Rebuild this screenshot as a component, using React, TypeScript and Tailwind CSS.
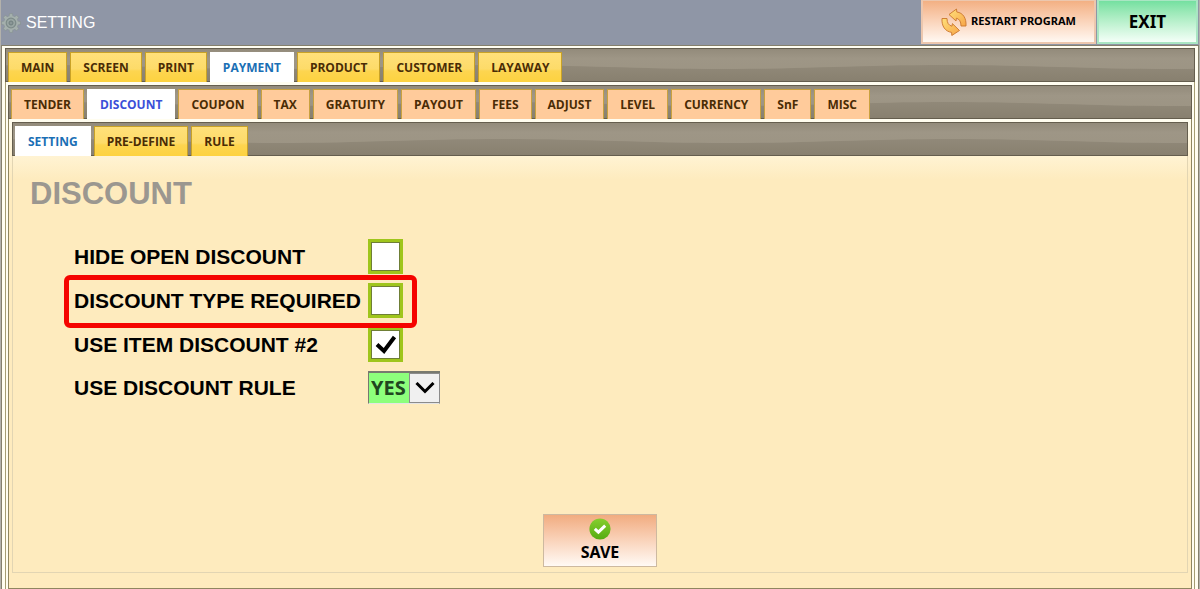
import React, { useId, useState } from 'react';

type Tone = 'yellow' | 'peach';

interface TabFrameProps {
  tabs: string[];
  initial: string;
  tone: Tone;
  children: React.ReactNode;
}

const toneClasses: Record<Tone, string> = {
  yellow:
    'border-[#c9a227] bg-[linear-gradient(#ffe07a_0%,#fddb69_55%,#fdd550_62%,#fdd23f_100%)] text-[#4a2c05]',
  peach: 'border-[#c9a13f] bg-[#ffcb9b] text-[#4a2c05]',
};

const activeText: Record<Tone, string> = {
  yellow: 'text-[#1a6fb5]',
  peach: 'text-[#3c4fd8]',
};

const BarTexture: React.FC = () => {
  const id = useId();
  return (
    <svg className="absolute inset-0 h-full w-full" aria-hidden="true">
      <defs>
        <linearGradient id={`${id}-fill`} x1="0" y1="0" x2="0" y2="1">
          <stop offset="0" stopColor="#918979" />
          <stop offset="1" stopColor="#877f6e" />
        </linearGradient>
        <pattern id={`${id}-wave`} x="40" width="450" height="34" patternUnits="userSpaceOnUse">
          <path
            d="M0 16 C85 16 140 20 225 20 S365 16 450 16 V34 H0 Z"
            fill={`url(#${id}-fill)`}
          />
        </pattern>
      </defs>
      <rect width="100%" height="100%" fill={`url(#${id}-wave)`} />
    </svg>
  );
};

const TabFrame: React.FC<TabFrameProps> = ({ tabs, initial, tone, children }) => {
  const [active, setActive] = useState(initial);

  return (
    <div className="flex flex-1 flex-col">
      <div className="relative h-[34px] border border-[#655e4e] bg-linear-to-b from-[#938b7b] via-[#9e9686] via-30% to-[#9b9382]">
        <BarTexture />
        <div className="relative flex h-[33px] gap-[3px] pt-[3px] pl-0.5" role="tablist">
          {tabs.map(tab => (
            <button
              key={tab}
              type="button"
              role="tab"
              aria-selected={tab === active}
              onClick={() => setActive(tab)}
              className={`border border-b-0 px-3 font-['Open_Sans',sans-serif] text-xs font-bold whitespace-nowrap ${
                tab === active ? `border-white bg-white ${activeText[tone]}` : toneClasses[tone]
              }`}
            >
              {tab}
            </button>
          ))}
        </div>
      </div>
      {children}
    </div>
  );
};

const GearIcon: React.FC = () => (
  <svg viewBox="0 0 20 20" className="h-5 w-5" aria-hidden="true">
    <g fill="#a5b0ad">
      {[0, 45, 90, 135, 180, 225, 270, 315].map(angle => (
        <path
          key={angle}
          d="M7.8 5 L8.5 0.6 H11.5 L12.2 5 Z"
          stroke="#84908f"
          strokeWidth="0.6"
          transform={`rotate(${angle} 10 10)`}
        />
      ))}
      <circle cx="10" cy="10" r="7" />
    </g>
    <circle cx="10" cy="10" r="4.8" fill="#98a5a2" stroke="#7d8b89" strokeWidth="1.2" />
    <circle cx="10" cy="10" r="2" fill="#8a9796" stroke="#71807f" strokeWidth="1" />
  </svg>
);

const RestartIcon: React.FC = () => (
  <svg viewBox="0 0 26 28" className="h-7 w-[26px]" aria-hidden="true">
    <defs>
      <linearGradient id="restart-fill" x1="0" y1="0" x2="1" y2="1">
        <stop offset="0" stopColor="#ffe07a" />
        <stop offset="1" stopColor="#f7a548" />
      </linearGradient>
    </defs>
    <g fill="url(#restart-fill)" stroke="#c9762b" strokeWidth="0.9" strokeLinejoin="round">
      <path d="M8 6.5 L15.5 1 L15.8 4 C22 4.8 25.5 10 25 18 L20 18 C20 13.5 18.4 11 15.4 10.2 L15 13 Z" />
      <path d="M18.5 22.5 L10.8 27.5 L10.6 24.4 C4 23.4 .5 18 1 10.5 L6 10.5 C6 14.8 7.6 17.4 11 18.2 L11.4 15.6 Z" />
    </g>
  </svg>
);

const SaveIcon: React.FC = () => (
  <svg viewBox="0 0 22 22" className="h-[22px] w-[22px]" aria-hidden="true">
    <defs>
      <linearGradient id="save-fill" x1="0" y1="0" x2="0" y2="1">
        <stop offset="0" stopColor="#86cf2e" />
        <stop offset="1" stopColor="#55ab12" />
      </linearGradient>
    </defs>
    <circle cx="11" cy="11" r="10.6" fill="url(#save-fill)" />
    <path d="M5.8 10.8 L9.4 14.2 L16.2 7.6" fill="none" stroke="#fff" strokeWidth="3" />
  </svg>
);

const CheckRow: React.FC<{ label: string; defaultChecked?: boolean }> = ({
  label,
  defaultChecked,
}) => {
  const id = useId();
  const [checked, setChecked] = useState(Boolean(defaultChecked));

  return (
    <div className="flex h-11 items-center">
      <label htmlFor={id} className="w-[294px] pt-0.5">
        {label}
      </label>
      <span className="grid h-[35px] w-[35px] bg-[#9fc51c] p-[3px]">
        <input
          id={id}
          type="checkbox"
          checked={checked}
          onChange={e => setChecked(e.target.checked)}
          className="col-start-1 row-start-1 h-full w-full appearance-none border border-[#6f7f36] bg-white"
        />
        {checked && (
          <svg
            viewBox="0 0 29 29"
            className="pointer-events-none col-start-1 row-start-1 h-full w-full"
            aria-hidden="true"
          >
            <path d="M6 14.5 L13 21 L23.5 7" fill="none" stroke="#000" strokeWidth="4" />
          </svg>
        )}
      </span>
    </div>
  );
};

const DiscountSettings: React.FC = () => {
  const [rule, setRule] = useState('YES');

  return (
    <div className="flex flex-1 flex-col border border-t-0 border-[#e2d5b3] bg-[linear-gradient(#fff3d3,#feebbe_24px)] px-[17px] pt-[18px] pb-[5px]">
      <h1 className="text-[31px] leading-10 font-bold text-[#9b9790]">DISCOUNT</h1>

      <div className="mt-5 ml-11 text-[21px] font-bold text-black">
        <CheckRow label="HIDE OPEN DISCOUNT" />
        <div className="relative">
          <CheckRow label="DISCOUNT TYPE REQUIRED" />
          {/* Highlight around the required row */}
          <div className="pointer-events-none absolute -top-[3px] -left-2.5 h-[53px] w-[353px] rounded-md border-5 border-[#f50400]" />
        </div>
        <CheckRow label="USE ITEM DISCOUNT #2" defaultChecked />
        <div className="flex h-[42px] items-center">
          <label htmlFor="discount-rule" className="w-[294px] pt-0.5">
            USE DISCOUNT RULE
          </label>
          <div className="relative">
            <select
              id="discount-rule"
              value={rule}
              onChange={e => setRule(e.target.value)}
              className="block h-[33px] w-[72px] appearance-none border border-t-2 border-[#77796f] border-b-[#e5e5e5] bg-[#8dff7c] pl-0.5 font-['Open_Sans',sans-serif] text-xl leading-[30px] font-bold text-[#21461f]"
            >
              <option>YES</option>
              <option>NO</option>
            </select>
            <span className="pointer-events-none absolute top-0.5 right-0 flex h-[30px] w-[31px] items-center justify-center border border-[#8b8b8b] bg-[#f0f0f0]">
              <svg viewBox="0 0 20 12" className="h-3 w-5" aria-hidden="true">
                <path d="M1.5 1 L10 9.5 L18.5 1" fill="none" stroke="#000" strokeWidth="3" />
              </svg>
            </span>
          </div>
        </div>
      </div>

      <button
        type="button"
        className="mt-auto flex h-[53px] w-[114px] flex-col items-center self-center border border-[#cdb9a0] bg-linear-to-b from-[#f1ac80] to-[#fffaf5] pt-[3px] font-['Noto_Sans',sans-serif] text-base leading-6 font-bold text-black"
      >
        <SaveIcon />
        SAVE
      </button>
    </div>
  );
};

const App: React.FC = () => {
  return (
    <div className="flex min-h-screen flex-col border-x border-[#b3b1ab] bg-[#8f96a6] font-['Liberation_Sans',Arial,sans-serif]">
      {/* Header */}
      <header className="flex h-[45px] justify-between pr-px">
        <div className="flex items-center gap-[5px] text-base text-white">
          <GearIcon />
          <span>SETTING</span>
        </div>
        <div className="flex h-11 gap-px">
          <button
            type="button"
            className="flex w-[175px] items-center justify-center gap-1 border-2 border-t border-[#ecc7ae] bg-linear-to-b from-[#f3b083] to-[#fff8f2] font-['Noto_Sans',sans-serif] text-[11px] font-bold whitespace-nowrap text-black"
          >
            <RestartIcon />
            RESTART PROGRAM
          </button>
          <button
            type="button"
            className="w-[101px] border-2 border-t border-[#a9e6c3] bg-linear-to-b from-[#74e0a0] to-[#f4fff8] font-['Noto_Sans',sans-serif] text-[17px] font-bold text-black"
          >
            EXIT
          </button>
        </div>
      </header>

      {/* Nested tab pages */}
      <main className="flex flex-1 flex-col border border-b-0 border-[#85806c] bg-[#fffdf0] px-[3px] pt-0.5">
        <TabFrame
          tabs={['MAIN', 'SCREEN', 'PRINT', 'PAYMENT', 'PRODUCT', 'CUSTOMER', 'LAYAWAY']}
          initial="PAYMENT"
          tone="yellow"
        >
          <div className="flex flex-1 flex-col border-x border-[#a69d72] px-0.5 pt-[3px]">
            <TabFrame
              tabs={[
                'TENDER',
                'DISCOUNT',
                'COUPON',
                'TAX',
                'GRATUITY',
                'PAYOUT',
                'FEES',
                'ADJUST',
                'LEVEL',
                'CURRENCY',
                'SnF',
                'MISC',
              ]}
              initial="DISCOUNT"
              tone="peach"
            >
              <div className="flex flex-1 flex-col border border-t-0 border-[#8f8660] bg-[linear-gradient(#fffdf0,#feebbe_60px)] px-[3px] pt-[3px] pb-[15px]">
                <TabFrame
                  tabs={['SETTING', 'PRE-DEFINE', 'RULE']}
                  initial="SETTING"
                  tone="yellow"
                >
                  <DiscountSettings />
                </TabFrame>
              </div>
            </TabFrame>
          </div>
        </TabFrame>
      </main>
    </div>
  );
};

export default App;
